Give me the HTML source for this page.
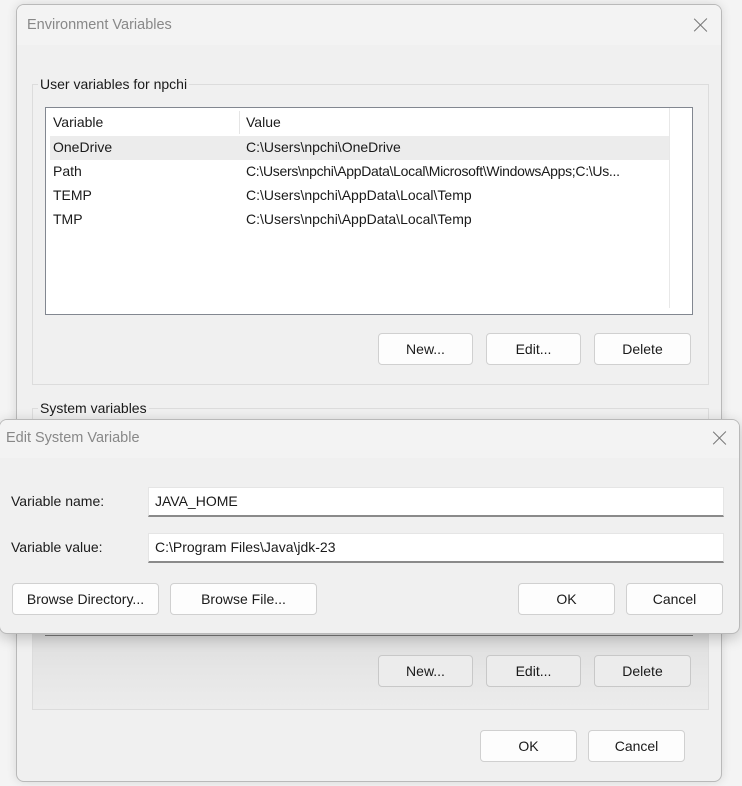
<!DOCTYPE html>
<html><head><style>
*{box-sizing:border-box;margin:0;padding:0}
body{width:742px;height:786px;background:#f4f4f4;position:relative;overflow:hidden;font-family:"Liberation Sans",sans-serif;font-size:14px;color:#1a1a1a}
.abs{position:absolute}
.t{position:absolute;white-space:nowrap}
.btn{position:absolute;height:32px;background:#fdfdfd;border:1px solid #d0d0d0;border-radius:4px;text-align:center;line-height:30px;font-size:14px}
.dim{background:#ececec;border-color:#c8c8c8}
.x{position:absolute;width:14px;height:14px}
.x:before,.x:after{content:"";position:absolute;left:6px;top:-2px;width:1.3px;height:18px;background:#777;transform:rotate(45deg)}
.x:after{transform:rotate(-45deg)}
.inp{position:absolute;background:#fff;border:1px solid #e5e5e5;border-bottom:2px solid #8a8a8a;height:30px;line-height:27px;padding-left:6px}
.lbl{background:#f0f0f0;padding:0 2px}
</style></head><body>

<div class="abs" style="left:16px;top:4px;width:706px;height:778px;background:#f0f0f0;border:1px solid #b9b9b9;border-radius:8px;box-shadow:0 0 10px rgba(0,0,0,.12);overflow:hidden">
  <div class="abs" style="left:0;top:0;width:706px;height:40px;background:#f3f3f3"></div>
  <div class="t" style="left:10px;top:12px;color:#888;font-size:14.5px">Environment Variables</div>
  <div class="x" style="left:677px;top:13px"></div>

  <div class="abs" style="left:15px;top:79px;width:677px;height:301px;border:1px solid #dcdcdc"></div>
  <div class="t lbl" style="left:21px;top:71px">User variables for npchi</div>

  <div class="abs" style="left:28px;top:102px;width:648px;height:208px;background:#fff;border:1px solid #828790;overflow:hidden">
    <div class="abs" style="left:193px;top:3px;width:1px;height:23px;background:#e5e5e5"></div>
    <div class="abs" style="left:623px;top:0;width:1px;height:200px;background:#e8e8e8"></div>
    <div class="t" style="left:7px;top:6px">Variable</div>
    <div class="t" style="left:200px;top:6px">Value</div>
    <div class="abs" style="left:4px;top:28px;width:619px;height:24px;background:#ececec"></div>
    <div class="t" style="left:7px;top:31px">OneDrive</div>
  </div>
  <div class="t" style="left:229px;top:134px">C:\Users\npchi\OneDrive</div>
  <div class="t" style="left:36px;top:158px">Path</div>
  <div class="t" style="left:229px;top:158px;width:418px;overflow:hidden;letter-spacing:-0.3px">C:\Users\npchi\AppData\Local\Microsoft\WindowsApps;C:\Us...</div>
  <div class="t" style="left:36px;top:182px">TEMP</div>
  <div class="t" style="left:229px;top:182px">C:\Users\npchi\AppData\Local\Temp</div>
  <div class="t" style="left:36px;top:206px">TMP</div>
  <div class="t" style="left:229px;top:206px">C:\Users\npchi\AppData\Local\Temp</div>

  <div class="btn" style="left:361px;top:328px;width:95px">New...</div>
  <div class="btn" style="left:469px;top:328px;width:95px">Edit...</div>
  <div class="btn" style="left:577px;top:328px;width:97px">Delete</div>

  <div class="abs" style="left:15px;top:403px;width:677px;height:302px;border:1px solid #dcdcdc;background:linear-gradient(#f0f0f0 0,#f0f0f0 14px,#dadada 212px,#e6e6e6 262px,#ececec)"></div>
  <div class="t lbl" style="left:21px;top:395px">System variables</div>
  <div class="abs" style="left:28px;top:600px;width:648px;height:31px;background:#e2e2e2;border-bottom:1px solid #777"></div>

  <div class="btn dim" style="left:361px;top:650px;width:95px">New...</div>
  <div class="btn dim" style="left:469px;top:650px;width:95px">Edit...</div>
  <div class="btn dim" style="left:577px;top:650px;width:97px">Delete</div>

  <div class="btn" style="left:463px;top:725px;width:97px">OK</div>
  <div class="btn" style="left:571px;top:725px;width:97px">Cancel</div>
</div>

<div class="abs" style="left:-1px;top:419px;width:741px;height:215px;background:#f0f0f0;border:1px solid #b9b9b9;border-radius:8px;box-shadow:0 4px 14px rgba(0,0,0,.22);overflow:hidden">
  <div class="abs" style="left:0;top:0;width:741px;height:38px;background:#f3f3f3"></div>
  <div class="t" style="left:6px;top:10px;color:#888;font-size:14.5px">Edit System Variable</div>
  <div class="x" style="left:713px;top:11px"></div>
  <div class="t" style="left:11px;top:73px">Variable name:</div>
  <div class="inp" style="left:148px;top:67px;width:576px">JAVA_HOME</div>
  <div class="t" style="left:11px;top:119px">Variable value:</div>
  <div class="inp" style="left:148px;top:113px;width:576px">C:\Program Files\Java\jdk-23</div>
  <div class="btn" style="left:12px;top:163px;width:147px">Browse Directory...</div>
  <div class="btn" style="left:170px;top:163px;width:147px">Browse File...</div>
  <div class="btn" style="left:518px;top:163px;width:97px">OK</div>
  <div class="btn" style="left:626px;top:163px;width:97px">Cancel</div>
</div>
</body></html>
